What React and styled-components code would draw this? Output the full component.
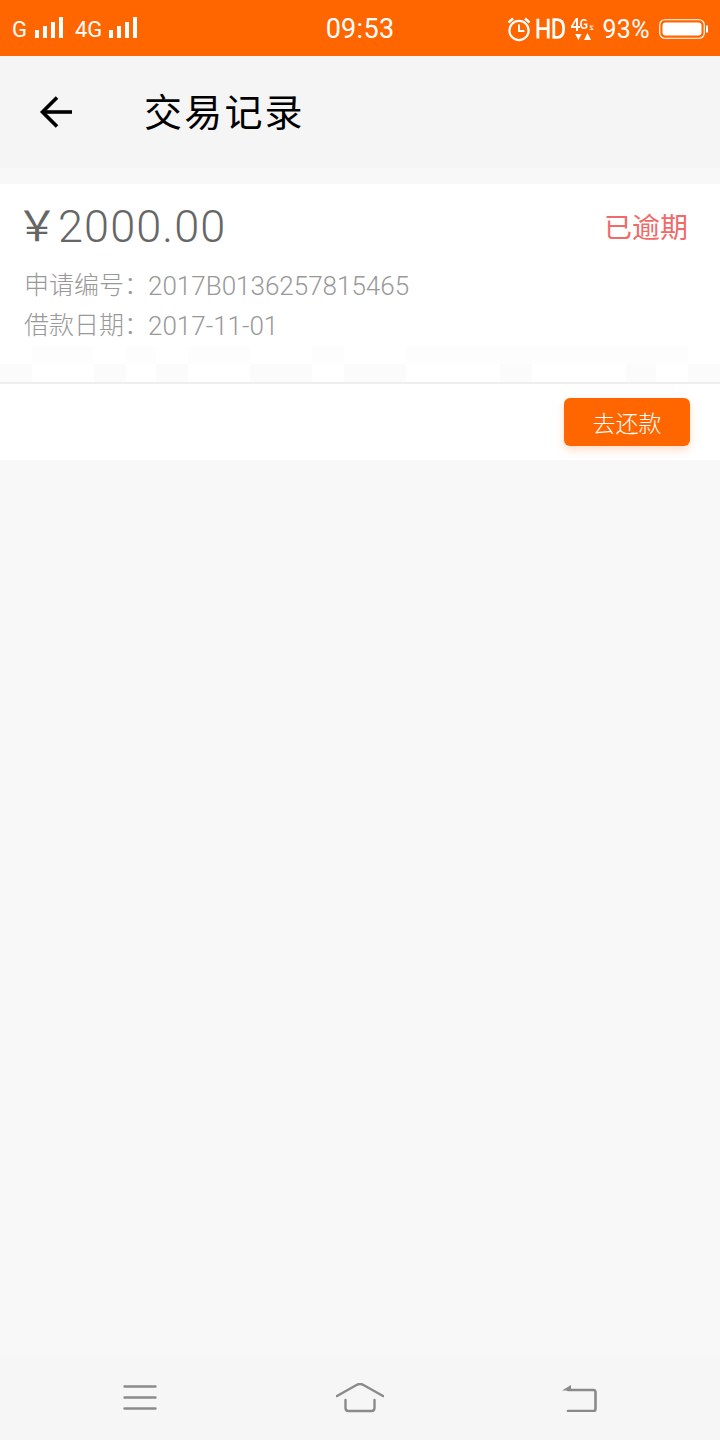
import React from "react";
import styled, { createGlobalStyle } from "styled-components";

const GlobalStyle = createGlobalStyle`
  html, body {
    margin: 0;
    padding: 0;
    background: #f8f8f8;
  }
  * { box-sizing: border-box; }
`;

const FONT = `"Roboto", "Noto Sans CJK SC", sans-serif`;

const Page = styled.div`
  width: 720px;
  height: 1440px;
  display: flex;
  flex-direction: column;
  background: #f8f8f8;
  font-family: ${FONT};
  overflow: hidden;
`;

const StatusBar = styled.div`
  height: 56px;
  flex: none;
  display: grid;
  grid-template-columns: 1fr auto 1fr;
  align-items: center;
  padding: 2px 12px 0 12px;
  background: #ff6600;
  color: #fff;
`;

const StatusSide = styled.div`
  display: flex;
  align-items: center;
  justify-content: ${(p) => (p.$right ? "flex-end" : "flex-start")};
  gap: ${(p) => p.$gap || 0}px;
`;

const NetLabel = styled.span`
  font-size: 22px;
  font-weight: 400;
  margin-left: ${(p) => p.$ml || 0}px;
  margin-right: ${(p) => p.$mr}px;
`;

const Clock = styled.span`
  font-size: 27px;
  letter-spacing: 0.3px;
`;

const Percent = styled.span`
  font-size: 25px;
  letter-spacing: 0.4px;
  margin: 0 4px 0 2px;
`;

const Header = styled.div`
  height: 112px;
  flex: none;
  display: flex;
  align-items: center;
  padding-left: 38px;
  background: #f5f5f5;
`;

const Title = styled.h1`
  margin: 2px 0 0 70px;
  font-size: 38px;
  line-height: 1;
  font-weight: 400;
  color: #000;
  letter-spacing: 2.2px;
`;

const Card = styled.div`
  margin-top: 16px;
  background: #fff;
  flex: none;
`;

const Info = styled.div`
  height: 162px;
  padding: 19px 32px 0 24px;
`;

const TopRow = styled.div`
  display: flex;
  justify-content: space-between;
  align-items: center;
  height: 48px;
  margin-bottom: 15px;
`;

const Amount = styled.span`
  display: flex;
  align-items: center;
  font-size: 45px;
  color: #666;
  line-height: 48px;
  font-weight: 300;
  letter-spacing: 1.1px;
`;

const Yen = styled.span`
  font-size: 42px;
  font-weight: 400;
  margin-left: -8px;
  margin-right: 0;
  letter-spacing: 0;
`;

const Overdue = styled.span`
  font-size: 28px;
  line-height: 48px;
  color: #f06a6a;
  margin-top: 4px;
`;

const Line = styled.div`
  font-size: 26px;
  line-height: 40px;
  color: #999;
  font-weight: 300;
  display: flex;
  white-space: nowrap;
`;

const LineLabel = styled.span`
  width: 124px;
  flex: none;
  font-size: 25px;
`;

const Smudge = styled.div`
  height: 18px;
  display: flex;
`;

const Patch = styled.div`
  flex: none;
  background: ${(p) => p.$color};
`;

const Divider = styled.div`
  height: 2px;
  background: #eeeeee;
`;

const Actions = styled.div`
  height: 76px;
  display: flex;
  align-items: flex-start;
  justify-content: flex-end;
  padding: 14px 30px 0 0;
`;

const PayButton = styled.button`
  width: 126px;
  height: 48px;
  border: 0;
  padding: 0;
  border-radius: 6px;
  background: #ff6600;
  color: #fff;
  font-family: ${FONT};
  font-size: 23px;
  font-weight: 300;
  box-shadow: 0 4px 8px rgba(255, 102, 0, 0.22);
`;

const Spacer = styled.div`
  flex: 1;
`;

const NavBar = styled.div`
  height: 84px;
  flex: none;
  display: grid;
  grid-template-columns: repeat(3, 1fr);
  align-items: center;
  justify-items: center;
  padding: 0 30px;
  background: #f6f6f6;
`;

const Bars = () => (
  <svg width="30" height="24" viewBox="0 0 30 24" fill="#fff">
    <rect x="1" y="13" width="4" height="8" />
    <rect x="9" y="9" width="4" height="12" />
    <rect x="17" y="5" width="4" height="16" />
    <rect x="25" y="0" width="4" height="21" />
  </svg>
);

const AlarmIcon = () => (
  <svg width="24" height="26" viewBox="0 0 24 26" fill="none" stroke="#fff" strokeWidth="2.2">
    <circle cx="12" cy="14.5" r="9.6" />
    <path d="M12 8.5v6.5h5.5" strokeWidth="2" />
    <path d="M1.5 6.5 6 2.5M22.5 6.5 18 2.5" strokeWidth="2.4" />
  </svg>
);

const HdIcon = () => (
  <svg width="30" height="26" viewBox="0 0 32 26" fill="none" stroke="#fff" strokeWidth="3">
    <path d="M2 2v21M13 2v21M2 12.5h11" />
    <path d="M19 3h3.5c4.5 0 7 2.5 7 9.5s-2.5 9.5-7 9.5H19z" />
  </svg>
);

const DualIcon = () => (
  <svg width="24" height="26" viewBox="0 0 24 26" fill="#fff">
    <path d="M5 2h2v8h2v2H7v3H5v-3H0v-2zM5 5 2 10h3z" />
    <path d="M16 4.5c-.8-1-2-1.500-3-1.500-2.500 0-4 2-4 5s1.500 5 4 5c1.500 0 2.500-.5 3.300-1.200V7.500h-3.500v1.500h1.800v2.200c-.4.300-1 .400-1.600.400-1.500 0-2.300-1.400-2.300-3.600s.8-3.600 2.300-3.600c.8 0 1.500.3 2 .9z" />
    <path d="M18.500 9.500h4v1h-2.600l2.400 2.500v.9h-4v-1h2.400l-2.200-2.400z" opacity="0.8" />
    <path d="M4 18h8l-4 6z" transform="translate(1 0) scale(0.8 1)" />
    <path d="M13 24h7l-3.500-7z" />
  </svg>
);

const BatteryIcon = () => (
  <svg width="49" height="20" viewBox="0 0 49 20" fill="none">
    <rect x="0.75" y="0.75" width="44.5" height="18.5" rx="5" stroke="#fff" strokeWidth="1.2" />
    <rect x="3.5" y="3.5" width="39" height="13" rx="3" fill="#fff" />
    <rect x="47" y="6.5" width="2" height="7" fill="#fff" />
  </svg>
);

const BackArrow = () => (
  <svg width="36" height="36" viewBox="0 0 36 36" fill="none" stroke="#000" strokeWidth="3.6">
    <path d="M5 18h29" />
    <path d="M19 3.500 4.500 18 19 32.500" />
  </svg>
);

const MenuIcon = () => (
  <svg width="34" height="26" viewBox="0 0 34 26" fill="none" stroke="#8a8a8a" strokeWidth="2.4" strokeLinecap="round">
    <path d="M1.500 1.500h31M1.500 12.500h31M1.500 23.500h31" />
  </svg>
);

const HomeIcon = () => (
  <svg width="48" height="30" viewBox="0 0 48 30" fill="none" stroke="#8a8a8a" strokeWidth="2.4" strokeLinecap="round">
    <path d="M1 13 20.500 2c2.300-1.200 4.700-1.200 7 0L47 13" />
    <path d="M9.500 17v8c0 2 1 3 3 3h23c2 0 3-1 3-3v-8" />
  </svg>
);

const BackIcon = () => (
  <svg width="36" height="28" viewBox="0 0 36 28" fill="none" stroke="#8a8a8a" strokeWidth="2.6" strokeLinecap="round">
    <path d="M6 6h25.500c1.500 0 2 1 2 2.500v16c0 1.500-.5 2.500-2 2.500H6" />
    <path d="M0 6.500 9 1v5.500z" fill="#8a8a8a" stroke="none" />
  </svg>
);

const TOP_PATCHES = [[32, "#fff"], [62, "#fdfdfd"], [32, "#fff"], [30, "#fdfdfd"], [32, "#fff"], [62, "#fdfdfd"], [62, "#fff"], [32, "#fdfdfd"], [62, "#fff"], [282, "#fdfdfd"], [32, "#fff"]];
const BOTTOM_PATCHES = [[32, "#fbfbfb"], [62, "#fff"], [32, "#fbfbfb"], [30, "#fff"], [32, "#fbfbfb"], [62, "#fff"], [62, "#fbfbfb"], [32, "#fff"], [62, "#fbfbfb"], [94, "#fff"], [32, "#fbfbfb"], [94, "#fff"], [30, "#fbfbfb"], [32, "#fff"], [32, "#fbfbfb"]];

const PatchRow = ({ patches }) => (
  <Smudge>
    {patches.map(([w, color], i) => (
      <Patch key={i} $color={color} style={{ width: w }} />
    ))}
  </Smudge>
);

export default function App() {
  return (
    <Page>
      <GlobalStyle />
      <StatusBar>
        <StatusSide>
          <NetLabel $mr={7}>G</NetLabel>
          <Bars />
          <NetLabel $ml={11} $mr={6}>4G</NetLabel>
          <Bars />
        </StatusSide>
        <Clock>09:53</Clock>
        <StatusSide $right $gap={5}>
          <AlarmIcon />
          <HdIcon />
          <DualIcon />
          <Percent>93%</Percent>
          <BatteryIcon />
        </StatusSide>
      </StatusBar>
      <Header>
        <BackArrow />
        <Title>交易记录</Title>
      </Header>
      <Card>
        <Info>
          <TopRow>
            <Amount><Yen>￥</Yen>2000.00</Amount>
            <Overdue>已逾期</Overdue>
          </TopRow>
          <Line><LineLabel>申请编号：</LineLabel>2017B0136257815465</Line>
          <Line><LineLabel>借款日期：</LineLabel>2017-11-01</Line>
        </Info>
        <PatchRow patches={TOP_PATCHES} />
        <PatchRow patches={BOTTOM_PATCHES} />
        <Divider />
        <Actions>
          <PayButton>去还款</PayButton>
        </Actions>
      </Card>
      <Spacer />
      <NavBar>
        <MenuIcon />
        <HomeIcon />
        <BackIcon />
      </NavBar>
    </Page>
  );
}
